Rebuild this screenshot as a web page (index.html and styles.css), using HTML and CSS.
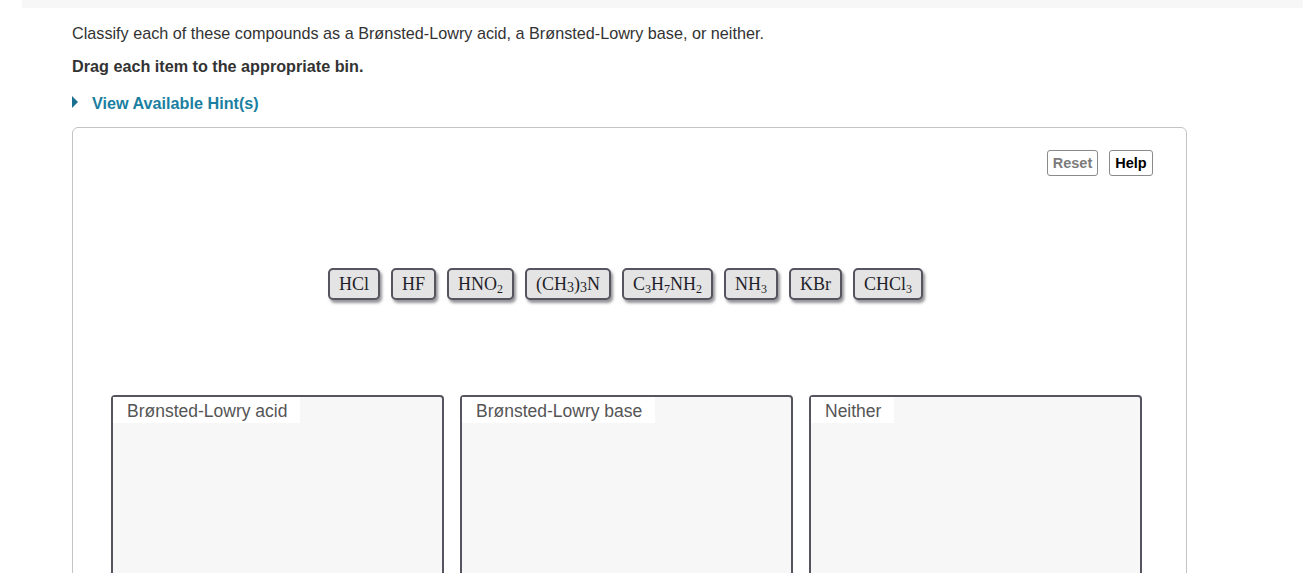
FILE: index.html
```html
<!DOCTYPE html>
<html>
<head>
<meta charset="utf-8">
<link rel="stylesheet" href="styles.css">
</head>
<body>
<div class="topbar"></div>
<div class="content">
  <p class="prompt">Classify each of these compounds as a Brønsted-Lowry acid, a Brønsted-Lowry base, or neither.</p>
  <p class="instr">Drag each item to the appropriate bin.</p>
  <div class="hint"><span class="tri"></span><span class="hint-text">View Available Hint(s)</span></div>
  <div class="panel">
    <div class="tools">
      <button class="btn btn-reset">Reset</button>
      <button class="btn btn-help">Help</button>
    </div>
    <div class="chips">
      <div class="chip">HCl</div>
      <div class="chip">HF</div>
      <div class="chip">HNO<sub>2</sub></div>
      <div class="chip">(CH<sub class="inl">3</sub>)<sub class="inl">3</sub>N</div>
      <div class="chip">C<sub>3</sub>H<sub>7</sub>NH<sub>2</sub></div>
      <div class="chip">NH<sub>3</sub></div>
      <div class="chip">KBr</div>
      <div class="chip">CHCl<sub>3</sub></div>
    </div>
    <div class="bins">
      <div class="bin"><div class="bin-label">Brønsted-Lowry acid</div></div>
      <div class="bin"><div class="bin-label">Brønsted-Lowry base</div></div>
      <div class="bin"><div class="bin-label">Neither</div></div>
    </div>
  </div>
</div>
</body>
</html>
```
FILE: styles.css
```css
html, body {
  margin: 0;
  padding: 0;
  background: #fff;
  font-family: "Liberation Sans", Arial, sans-serif;
  color: #333;
  overflow: hidden;
}
.topbar {
  margin-left: 22px;
  height: 8px;
  background: #f7f7f7;
}
.content {
  padding-left: 72px;
  padding-top: 15px;
}
.prompt {
  margin: 0;
  font-size: 16.2px;
  line-height: 20px;
  color: #333;
}
.instr {
  margin: 13px 0 0 0;
  font-size: 16.2px;
  line-height: 20px;
  font-weight: bold;
  color: #333;
}
.hint {
  margin-top: 17px;
  height: 20px;
  display: flex;
  align-items: center;
}
.tri {
  width: 0;
  height: 0;
  border-top: 6px solid transparent;
  border-bottom: 6px solid transparent;
  border-left: 6px solid #1b6f8f;
  margin-right: 14px;
  margin-top: -2px;
}
.hint-text {
  font-size: 16.2px;
  font-weight: bold;
  color: #1a7fa1;
}
.panel {
  margin-top: 14px;
  width: 1113px;
  height: 520px;
  border: 1px solid #c4c4c4;
  border-radius: 6px;
}
.tools {
  display: flex;
  justify-content: flex-end;
  gap: 11px;
  padding: 22px 33px 0 0;
}
.btn {
  height: 26px;
  box-sizing: border-box;
  border: 1px solid #8a8a8a;
  border-radius: 3px;
  background: #fff;
  font-family: "Liberation Sans", Arial, sans-serif;
  font-size: 14.5px;
  font-weight: bold;
  padding: 0;
  line-height: 22px;
  text-align: center;
}
.btn-reset { color: #7b7b7b; width: 51px; }
.btn-help { color: #000; width: 44px; }
.chips {
  display: flex;
  justify-content: center;
  gap: 11px;
  margin-top: 92px;
  margin-right: 8px;
}
.chip {
  height: 32px;
  box-sizing: border-box;
  border: 2px solid #55555f;
  border-radius: 5px;
  background: #e4e4e4;
  box-shadow: 2px 3px 3px rgba(60, 60, 70, 0.55);
  font-family: "Liberation Serif", "Times New Roman", serif;
  font-size: 18px;
  line-height: 28px;
  color: #1f1f2a;
  padding: 0 9px;
  white-space: nowrap;
}
.chip sub {
  font-size: 12px;
  line-height: 0;
  vertical-align: -3px;
}
.chip sub.inl {
  font-size: 14px;
  vertical-align: -2px;
}
.bins {
  display: flex;
  gap: 16px;
  padding-left: 38px;
  margin-top: 95px;
}
.bin {
  width: 333px;
  height: 200px;
  box-sizing: border-box;
  border: 2px solid #55555f;
  border-radius: 4px;
  background: #f7f7f7;
}
.bin-label {
  display: inline-block;
  background: #fff;
  height: 26px;
  line-height: 28px;
  padding: 0 13px 0 14px;
  font-size: 17.5px;
  color: #555;
}
```
